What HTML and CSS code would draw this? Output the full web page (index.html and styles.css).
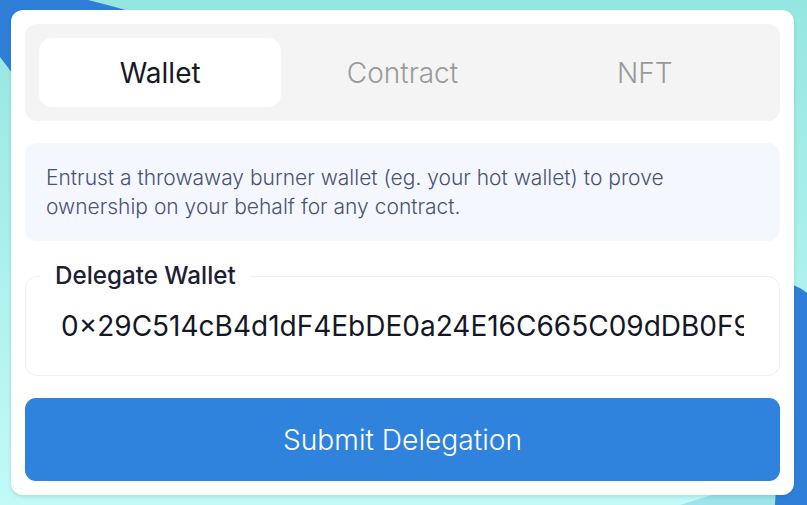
FILE: index.html
```html
<!DOCTYPE html>
<html lang="en">
<head>
<meta charset="utf-8">
<title>Delegate</title>
<link rel="stylesheet" href="styles.css">
</head>
<body>
<main class="card">
  <nav class="tabs">
    <button class="tab tab-active">Wallet</button>
    <button class="tab">Contract</button>
    <button class="tab">NFT</button>
  </nav>
  <p class="info">Entrust a throwaway burner wallet (eg. your hot wallet) to prove ownership on your behalf for any contract.</p>
  <fieldset class="field">
    <legend class="field-label">Delegate Wallet</legend>
    <input class="field-input" type="text" value="0×29C514cB4d1dF4EbDE0a24E16C665C09dDB0F9">
  </fieldset>
  <button class="submit">Submit Delegation</button>
</main>
</body>
</html>
```
FILE: styles.css
```css
html, body {
  margin: 0;
  padding: 0;
}
body {
  width: 807px;
  height: 505px;
  overflow: hidden;
  font-family: Inter, "Noto Sans", sans-serif;
  background-color: #a8eeea;
  background-image: url("data:image/svg+xml,<svg xmlns='http://www.w3.org/2000/svg' width='807' height='505' viewBox='0 0 807 505'><defs><linearGradient id='g' x1='0' y1='0' x2='0' y2='1'><stop offset='0' stop-color='%2395e6e1'/><stop offset='1' stop-color='%23c2faf8'/></linearGradient></defs><rect width='807' height='505' fill='url(%23g)'/><path d='M680 505L776 505L792 470Z' fill='%239fe4ea'/><path d='M0 0H88Q112 6 140 14L140 110L40 110L0 57Z' fill='%232f7fd9'/><path d='M790 284Q800 287 807 293V505H775Q780 400 790 284Z' fill='%232f7fd9'/></svg>");
  background-repeat: no-repeat;
}
.card {
  box-sizing: border-box;
  width: 783px;
  height: 485px;
  margin: 10px 0 0 11px;
  padding: 14px;
  background: #ffffff;
  border-radius: 12px;
  box-shadow: 0 2px 4px rgba(0, 70, 80, 0.14);
  display: flex;
  flex-direction: column;
  gap: 22px;
}
.tabs {
  display: grid;
  grid-template-columns: repeat(3, 1fr);
  padding: 14px;
  background: #f4f4f4;
  border-radius: 12px;
}
.tab {
  height: 69px;
  border: none;
  border-radius: 13px;
  background: transparent;
  font-family: Inter, "Noto Sans", sans-serif;
  font-size: 28px;
  font-weight: 300;
  color: #9a9a9a;
  padding: 0;
  cursor: pointer;
}
.tab-active {
  background: #ffffff;
  color: #161a24;
  font-weight: 400;
}
.info {
  margin: 0;
  box-sizing: border-box;
  height: 98px;
  padding: 20px 80px 20px 21px;
  background: #f4f7fe;
  border-radius: 12px;
  font-size: 21px;
  font-weight: 300;
  line-height: 29px;
  color: #4a5372;
}
.field {
  margin: 0;
  padding: 21px 35px 33px;
  border: 1px solid #eeeeee;
  border-radius: 12px;
  min-width: 0;
}
.field-label {
  margin-left: -21px;
  padding: 0 15px;
  font-size: 24.2px;
  line-height: 26px;
  font-weight: 500;
  color: #1c2032;
}
.field-input {
  display: block;
  box-sizing: border-box;
  width: 100%;
  height: 32px;
  padding: 0;
  border: none;
  outline: none;
  background: transparent;
  font-family: Inter, "Noto Sans", sans-serif;
  font-size: 28px;
  color: #141826;
}
.submit {
  height: 83px;
  border: none;
  border-radius: 11px;
  background: #2f83dc;
  color: #ffffff;
  font-family: Inter, "Noto Sans", sans-serif;
  font-size: 28.2px;
  font-weight: 300;
  cursor: pointer;
}
```
